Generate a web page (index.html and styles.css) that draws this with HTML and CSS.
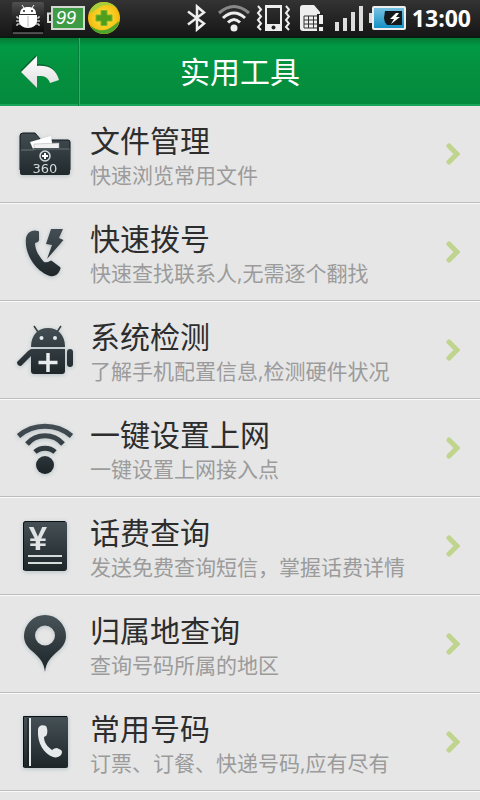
FILE: index.html
```
<!DOCTYPE html>
<html lang="zh-CN">
<head>
<meta charset="utf-8">
<meta name="viewport" content="width=device-width, initial-scale=1">
<title>实用工具</title>
<link rel="stylesheet" href="styles.css">
</head>
<body>
<svg class="defs" width="0" height="0" aria-hidden="true">
  <defs>
    <linearGradient id="ink" gradientUnits="userSpaceOnUse" x1="0" y1="4" x2="0" y2="58">
      <stop offset="0" stop-color="#465157"/>
      <stop offset="1" stop-color="#1b2326"/>
    </linearGradient>
    <linearGradient id="silver" x1="0" y1="0" x2="0" y2="1">
      <stop offset="0" stop-color="#ffffff"/>
      <stop offset="1" stop-color="#dedede"/>
    </linearGradient>
    <linearGradient id="tile" x1="0" y1="0" x2="0" y2="1">
      <stop offset="0" stop-color="#505050"/>
      <stop offset=".5" stop-color="#262626"/>
      <stop offset="1" stop-color="#080808"/>
    </linearGradient>
    <linearGradient id="charge" x1="0" y1="0" x2="0" y2="1">
      <stop offset="0" stop-color="#7cc4e4"/>
      <stop offset="1" stop-color="#0f8fc4"/>
    </linearGradient>
    <radialGradient id="gold" cx=".5" cy=".5" r=".5">
      <stop offset="0" stop-color="#ffe84a"/>
      <stop offset="1" stop-color="#f5b90a"/>
    </radialGradient>
  </defs>
</svg>

<div class="status">
  <div class="status-group status-left">
    <svg width="32" height="32" viewBox="0 0 32 32" aria-hidden="true">
      <rect width="32" height="31" rx="2" fill="url(#tile)"/>
      <path d="M1 31H31" stroke="#8a8a8a"/>
      <g fill="#fff">
        <path d="M8 12C8 7 11 5 16 5S24 7 24 12Z"/>
        <path d="M7 13H25V19C25 23 21 26 16 26S7 23 7 19Z"/>
      </g>
      <path d="M12 6L10 3M20 6L22 3M8 16H5V14M24 16H27V14M8 19H4M24 19H28M8 22H5V24M24 22H27V24" fill="none" stroke="#fff"/>
      <path d="M16 14V25" stroke="#bbb"/>
      <circle cx="12" cy="9" r="1" fill="#222"/><circle cx="20" cy="9" r="1" fill="#222"/>
    </svg>
    <svg width="38" height="24" viewBox="0 0 38 24" aria-hidden="true">
      <path d="M5 7.500H1V16H5" fill="#222" stroke="#d8ddd8" stroke-width="2"/>
      <rect x="5" y="1" width="32" height="22" fill="#3d9b46" stroke="#d0d8d0" stroke-width="2"/>
      <text x="9" y="18" class="charge-text">99</text>
    </svg>
    <svg width="32" height="32" viewBox="0 0 32 32" aria-hidden="true">
      <circle cx="16" cy="16" r="16" fill="url(#gold)"/>
      <path d="M1 11C4 3 10 0 16 0C23 0 28 4 30 8C24 1 15 3 12 5C8 7 5 10 1 11Z" fill="#a6cf3a"/>
      <path d="M31.500 19C29 28 23 32 16 32C9 32 4 28 2 23C9 30 17 29 22 26C26 24 28 21 31.500 19Z" fill="#4fa52b"/>
      <path d="M13 8.500H19V13H24V19H19V23.500H13V19H8V13H13Z" fill="#4f9e1c" stroke="#7fb52a"/>
    </svg>
  </div>
  <div class="status-group status-right">
    <svg width="20" height="28" viewBox="0 0 20 28" aria-hidden="true">
      <path d="M2 7.500L18 19.500L11 25.500V2.500L18 8.500L2 20.500" fill="none" stroke="#eee" stroke-width="2.500"/>
    </svg>
    <svg class="status-wifi" width="32" height="28" viewBox="0 0 32 28" aria-hidden="true">
      <g fill="none" stroke-width="3">
        <path d="M1 9Q16-4 31 9" stroke="#888"/>
        <path d="M5 14Q16 4 27 14" stroke="#eee"/>
        <path d="M10 18.500Q16 12.500 22 18.500" stroke="#eee"/>
      </g>
      <circle cx="16" cy="24" r="3.500" fill="#eee"/>
    </svg>
    <svg width="34" height="28" viewBox="0 0 34 28" aria-hidden="true">
      <path d="M9 1H26V27H9ZM11 4V20H24V4Z" fill="#eee" fill-rule="evenodd"/>
      <circle cx="17.500" cy="23.500" r="2" fill="#222"/>
      <path d="M2 2L5 5.500L2 9L5 12.500L2 16L5 19.500L2 23L5 26M30 2L33 5.500L30 9L33 12.500L30 16L33 19.500L30 23L33 26" fill="none" stroke="#eee" stroke-width="2"/>
    </svg>
    <svg class="status-sim" width="24" height="28" viewBox="0 0 24 28" aria-hidden="true">
      <path d="M0 4Q0 1 3 1H14L20 8V27H3Q0 27 0 24Z" fill="#eee"/>
      <path d="M4 12H18V24H4ZM4 16H18M4 20H18M8.500 12V24M13.500 12V24" fill="none" stroke="#333"/>
      <path d="M17 10H24V28H17Z" fill="#222"/>
      <path d="M19 11H23V20H19ZM19 23H23V27H19Z" fill="#eee"/>
    </svg>
    <svg class="status-signal" width="28" height="28" viewBox="0 0 28 28" aria-hidden="true">
      <path d="M0 18H4V27H0ZM8 14H12V27H8ZM16 8H20V27H16ZM24 2H28V27H24Z" fill="#ddd"/>
    </svg>
    <svg width="37" height="24" viewBox="0 0 37 24" aria-hidden="true">
      <path d="M3 7H0V17H3Z" fill="#ddd"/>
      <rect x="4" y="1" width="32" height="22" rx="1" fill="url(#charge)" stroke="#eee" stroke-width="2"/>
      <path d="M16 5H33V19H18Q15 16 15 12Z" fill="#15191c"/>
      <path d="M27 7L21 13H25L22 18L31 11H27L30 7Z" fill="#fff"/>
    </svg>
    <span class="clock">13:00</span>
  </div>
</div>

<header class="bar">
  <button class="back" type="button" aria-label="返回">
    <svg width="40" height="34" viewBox="0 0 40 34" aria-hidden="true">
      <path d="M0 16L16 0V9.500C28 8.500 36 13 38 24L29.500 27C28 21 24 19.500 16 20V32Z" fill="#03602a"/>
      <path d="M1 17L17 1V11C28 10 36 14 39 25L30 28C28 22 24 20.500 17 21V33Z" fill="url(#silver)"/>
    </svg>
  </button>
  <h1 class="bar-title">实用工具</h1>
</header>

<main class="list">
  <a class="row" href="#files">
    <svg class="icon" viewBox="0 0 58 60" aria-hidden="true">
      <path d="M4 12Q4 9 7 9H19L25 16H52Q54 16 54 18V46H4Z" fill="url(#ink)" stroke="#11181b"/>
      <path d="M14 18L35 12L37 25H17Z" fill="#fff"/>
      <path d="M18 20L43 19V26H18Z" fill="#f1f1f1" stroke="#aaa" stroke-width=".5"/>
      <path d="M4 27Q4 25 6 25H16L19 24H54V49Q54 51 52 51H6Q4 51 4 49Z" fill="url(#ink)"/>
      <path d="M5 26H17L20 25H53" fill="none" stroke="#69757a"/>
      <circle cx="29" cy="32" r="5" fill="none" stroke="#d4dadb" stroke-width="1.500"/>
      <path d="M29 29V35M26 32H32" stroke="#fff" stroke-width="2"/>
      <text x="29" y="49" class="brand-text">360</text>
    </svg>
    <span class="text"><span class="name">文件管理</span><span class="desc">快速浏览常用文件</span></span>
    <svg class="chevron" viewBox="0 0 14 22" aria-hidden="true"><path d="M3 3L11 11L3 19"/></svg>
  </a>
  <a class="row" href="#dial">
    <svg class="icon" viewBox="0 0 58 60" aria-hidden="true">
      <path d="M10 16C11 10 17 7 22 9Q23 9 23 10V18Q23 20 19 21C19 28 23 34 28 40Q31 41 34 39Q35 38 36 39L44 45Q45 46 44 48C42 53 38 55 34 54C21 50 8 33 10 16Z" fill="url(#ink)"/>
      <path d="M35 7H47L43 16L47.500 18L31 37L36 23L30 22Z" fill="url(#ink)"/>
    </svg>
    <span class="text"><span class="name">快速拨号</span><span class="desc">快速查找联系人,无需逐个翻找</span></span>
    <svg class="chevron" viewBox="0 0 14 22" aria-hidden="true"><path d="M3 3L11 11L3 19"/></svg>
  </a>
  <a class="row" href="#check">
    <svg class="icon" viewBox="0 0 58 60" aria-hidden="true">
      <path d="M18 6L22 12M45 6L41 12" stroke="#333d42" stroke-width="1.500"/>
      <path d="M15 27C15 15 22 8 32 8S49 15 49 27Z" fill="url(#ink)"/>
      <circle cx="25.500" cy="18" r="2" fill="#e4e9ea"/><circle cx="39" cy="18" r="2" fill="#e4e9ea"/>
      <path d="M15 29H49V51Q49 54 46 54H18Q15 54 15 51V36L5 46Q1 46 1 42L12 31Z" fill="url(#ink)"/>
      <rect x="51" y="29" width="6" height="18" rx="3" fill="url(#ink)"/>
      <path d="M32 33V52M22.500 42.500H41.500" stroke="#e8ecec" stroke-width="3.500"/>
    </svg>
    <span class="text"><span class="name">系统检测</span><span class="desc">了解手机配置信息,检测硬件状况</span></span>
    <svg class="chevron" viewBox="0 0 14 22" aria-hidden="true"><path d="M3 3L11 11L3 19"/></svg>
  </a>
  <a class="row" href="#network">
    <svg class="icon" viewBox="0 0 58 60" aria-hidden="true">
      <g fill="none" stroke="url(#ink)" stroke-width="5">
        <path d="M2.500 18A41 41 0 0 1 55.500 18"/>
        <path d="M11 26A24 24 0 0 1 47 26"/>
        <path d="M19 34A15 15 0 0 1 39 34"/>
      </g>
      <circle cx="29" cy="47" r="9" fill="url(#ink)"/>
    </svg>
    <span class="text"><span class="name">一键设置上网</span><span class="desc">一键设置上网接入点</span></span>
    <svg class="chevron" viewBox="0 0 14 22" aria-hidden="true"><path d="M3 3L11 11L3 19"/></svg>
  </a>
  <a class="row" href="#bill">
    <svg class="icon" viewBox="0 0 58 60" aria-hidden="true">
      <rect x="7" y="5" width="44" height="50" rx="3" fill="url(#ink)"/>
      <path d="M7.500 54V8Q7.500 5.500 10 5.500H49" fill="none" stroke="#0d1315"/>
      <text x="22" y="34" class="yen-text">¥</text>
      <path d="M12 40H46M12 47H46" stroke="#d5dadb" stroke-width="2"/>
    </svg>
    <span class="text"><span class="name">话费查询</span><span class="desc">发送免费查询短信，掌握话费详情</span></span>
    <svg class="chevron" viewBox="0 0 14 22" aria-hidden="true"><path d="M3 3L11 11L3 19"/></svg>
  </a>
  <a class="row" href="#region">
    <svg class="icon" viewBox="0 0 58 60" aria-hidden="true">
      <path d="M29 58C28 48 23 43 16 37C11 33 8 28 8 22A21 21 0 0 1 50 22C50 28 47 33 42 37C35 43 30 48 29 58ZM29 11.500A10 10 0 1 0 29 31.500A10 10 0 1 0 29 11.500Z" fill="url(#ink)" fill-rule="evenodd"/>
    </svg>
    <span class="text"><span class="name">归属地查询</span><span class="desc">查询号码所属的地区</span></span>
    <svg class="chevron" viewBox="0 0 14 22" aria-hidden="true"><path d="M3 3L11 11L3 19"/></svg>
  </a>
  <a class="row" href="#numbers">
    <svg class="icon" viewBox="0 0 58 60" aria-hidden="true">
      <rect x="7" y="4" width="45" height="52" rx="2" fill="url(#ink)"/>
      <path d="M7.500 55V4.500H51" fill="none" stroke="#0d1315"/>
      <path d="M12 6V54" stroke="#11181a"/>
      <path d="M14 6V54" stroke="#e4e9ea" stroke-width="2"/>
      <path d="M22 18C22 14 26 12 30 14Q32 17 31 22Q31 24 28 25C28 31 32 35 36 38Q38 36 41 36L45 38Q47 40 45 43C43 45 40 46 37 45C28 42 21 31 22 18Z" fill="#e6eaea"/>
    </svg>
    <span class="text"><span class="name">常用号码</span><span class="desc">订票、订餐、快递号码,应有尽有</span></span>
    <svg class="chevron" viewBox="0 0 14 22" aria-hidden="true"><path d="M3 3L11 11L3 19"/></svg>
  </a>
</main>
</body>
</html>
```
FILE: styles.css
```
* {
  box-sizing: border-box;
}

html {
  overflow-x: hidden;
  scrollbar-width: none;
}

body {
  margin: 0;
  background: #e6e6e6;
  font-family: "Open Sans", "Noto Sans CJK SC", sans-serif;
}

.defs {
  position: absolute;
}

.status {
  display: flex;
  justify-content: space-between;
  align-items: center;
  height: 38px;
  padding: 0 9px 0 12px;
  background: linear-gradient(#333333, #161616);
  border-bottom: 2px solid #0a1a10;
}

.status-group {
  display: flex;
  align-items: center;
}

.status-left {
  gap: 3px;
}

.status-right {
  gap: 6px;
}

.status-wifi {
  margin-left: 6px;
}

.status-sim {
  margin-left: 4px;
}

.status-signal {
  margin-left: 5px;
}

.charge-text {
  font: italic 18px "Liberation Sans", sans-serif;
  fill: #ffffff;
}

.clock {
  color: #ffffff;
  font-size: 23px;
  font-weight: 700;
  line-height: 36px;
}

.bar {
  display: grid;
  grid-template-columns: 80px 1fr 80px;
  height: 68px;
  background: linear-gradient(#047a35, #019a45 8px, #04913f 50%, #048a3d);
  border-bottom: 2px solid #1aa558;
}

.back {
  display: flex;
  align-items: center;
  justify-content: center;
  padding: 0;
  background: none;
  border: 0;
  border-right: 1px solid #2fae66;
  box-shadow: inset -1px 0 #04803a;
}

.bar-title {
  margin: 0;
  color: #ffffff;
  font-size: 30px;
  font-weight: 400;
  line-height: 68px;
  text-align: center;
}

.row {
  display: flex;
  align-items: center;
  height: 98px;
  padding: 0 20px 2px 16px;
  border-bottom: 1px solid #fafafa;
  box-shadow: inset 0 -1px #bcbcbc;
  color: #2d2d2d;
  text-decoration: none;
}

.icon {
  flex: none;
  width: 58px;
  height: 60px;
  filter: drop-shadow(0 1px 2px #b4c0c4);
}

.brand-text {
  font: 13px "DejaVu Sans", sans-serif;
  fill: #d4dadb;
  text-anchor: middle;
}

.yen-text {
  font: bold 33px "Liberation Sans", sans-serif;
  fill: #dfe3e4;
  text-anchor: middle;
}

.text {
  display: flex;
  flex: 1;
  flex-direction: column;
  min-width: 0;
  padding-left: 16px;
}

.name {
  font-size: 30px;
  line-height: 42px;
}

.desc {
  color: #9b9b9b;
  font-size: 21px;
  line-height: 26px;
}

.chevron {
  flex: none;
  width: 14px;
  height: 22px;
  fill: none;
  stroke: #bfd48c;
  stroke-width: 5;
  stroke-linecap: round;
}
```
